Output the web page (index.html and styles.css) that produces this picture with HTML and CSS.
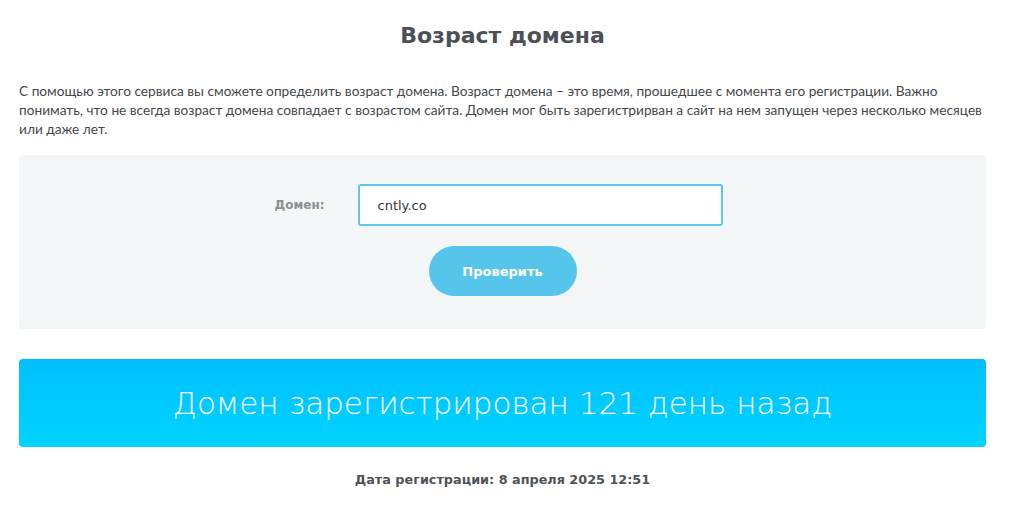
FILE: index.html
```html
<!DOCTYPE html>
<html lang="ru">
<head>
<meta charset="utf-8">
<title>Возраст домена</title>
<link rel="stylesheet" href="styles.css">
</head>
<body>
<main class="page">
  <h1 class="title">Возраст домена</h1>
  <p class="intro">С помощью этого сервиса вы сможете определить возраст домена. Возраст домена – это время, прошедшее с момента его регистрации. Важно понимать, что не всегда возраст домена совпадает с возрастом сайта. Домен мог быть зарегистрирван а сайт на нем запущен через несколько месяцев или даже лет.</p>
  <form class="check-box">
    <div class="field-row">
      <label class="field-label" for="domain">Домен:</label>
      <input class="field-input" id="domain" type="text" value="cntly.co">
    </div>
    <button class="check-btn" type="button">Проверить</button>
  </form>
  <div class="result">Домен зарегистрирован 121 день назад</div>
  <p class="reg-date">Дата регистрации: 8 апреля 2025 12:51</p>
</main>
</body>
</html>
```
FILE: styles.css
```css
* { box-sizing: border-box; }
html, body { margin: 0; padding: 0; background: #fff; }
body { font-family: "Open Sans", "DejaVu Sans", sans-serif; color: #444; }
.page {
  width: 967px;
  margin: 0 0 0 19px;
  display: flex;
  flex-direction: column;
}
.title {
  margin: 20px 0 0;
  text-align: center;
  font-family: "DejaVu Sans", sans-serif;
  font-weight: 700;
  font-size: 22px;
  line-height: 32px;
  color: #4b5057;
}
.intro {
  margin: 29px 0 0;
  font-family: "Lato", sans-serif;
  font-size: 13.7px;
  line-height: 19px;
  color: #44474b;
}
.check-box {
  margin: 17px 0 0;
  height: 174px;
  background: #f3f6f7;
  border-radius: 4px;
  display: flex;
  flex-direction: column;
  align-items: center;
  padding-top: 29px;
}
.field-row {
  display: flex;
  align-items: center;
  padding-right: 8px;
}
.field-label {
  width: 83px;
  font-family: "DejaVu Sans", sans-serif;
  font-weight: 700;
  font-size: 12px;
  color: #8c8f93;
}
.field-input {
  width: 365px;
  height: 42px;
  border: 2px solid #62c6ec;
  border-radius: 3px;
  padding: 0 0 0 18px;
  font-family: "DejaVu Sans", sans-serif;
  font-size: 13px;
  color: #333;
  background: #fff;
  outline: none;
}
.check-btn {
  margin-top: 20px;
  width: 148px;
  height: 50px;
  border: 0;
  border-radius: 25px;
  background: #56c5ec;
  color: #fff;
  font-family: "DejaVu Sans", sans-serif;
  font-weight: 700;
  font-size: 13px;
}
.result {
  margin-top: 30px;
  height: 88px;
  border-radius: 4px;
  background: linear-gradient(to bottom, #00bfff, #00d4ff);
  color: #fff;
  display: flex;
  align-items: center;
  justify-content: center;
  font-family: "DejaVu Sans", sans-serif;
  font-weight: 300;
  font-size: 31px;
}
.reg-date {
  margin: 25px 0 0;
  text-align: center;
  font-family: "DejaVu Sans", sans-serif;
  font-weight: 700;
  font-size: 12.8px;
  color: #4f5358;
}
```
